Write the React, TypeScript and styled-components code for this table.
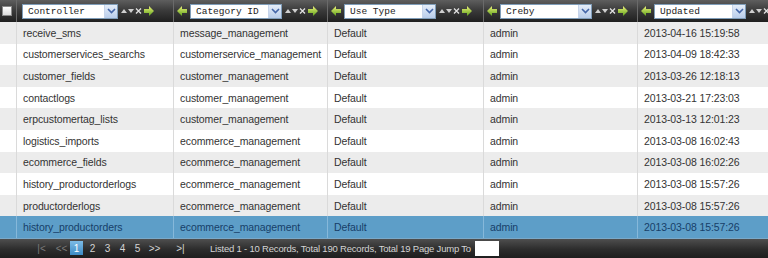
import React from "react";
import styled, { createGlobalStyle } from "styled-components";

const Global = createGlobalStyle`
  html, body { margin: 0; padding: 0; background: #fff; }
  body { font-family: "Liberation Sans", Arial, sans-serif; }
  * { box-sizing: border-box; }
`;

const COLS = "17px 157px 154px 156px 154px 160px";

const Grid = styled.div`
  width: 768px;
  height: 258px;
  overflow: hidden;
  display: flex;
  flex-direction: column;
`;

const HeaderRow = styled.div`
  display: grid;
  grid-template-columns: ${COLS};
  height: 22px;
  flex: none;
  background: linear-gradient(#5e5e5e 0%, #3c3c3c 45%, #1f1f1f 100%);
`;

const HeadCell = styled.div<{ $first?: boolean }>`
  display: flex;
  align-items: center;
  gap: 3px;
  padding-left: ${(p) => (p.$first ? "5px" : "3px")};
  border-right: 1px solid #6a6a6a;
  overflow: hidden;
  white-space: nowrap;
`;

const CheckCell = styled.div`
  display: flex;
  align-items: center;
  justify-content: center;
  border-right: 1px solid #6a6a6a;
`;

const HeadCheck = styled.span`
  width: 10px;
  height: 10px;
  margin-left: -2px;
  background: linear-gradient(#ffffff, #dcdcdc);
  border: 1px solid #8a8a8a;
`;

const Select = styled.div<{ $w: number }>`
  width: ${(p) => p.$w}px;
  height: 15px;
  flex: none;
  display: flex;
  align-items: center;
  background: #fff;
  border: 1px solid #7f9db9;
  font-family: "Liberation Mono", "Courier New", monospace;
  font-size: 9.5px;
  font-weight: normal;
  color: #222;
  padding-left: 5px;
`;

const SelectText = styled.span`
  flex: 1;
  overflow: hidden;
`;

const DropBtn = styled.span`
  width: 13px;
  height: 13px;
  display: flex;
  align-items: center;
  justify-content: center;
  background: linear-gradient(#e4ecf8, #b9cdea);
  border-left: 1px solid #c6d4ea;
`;

const IconGroup = styled.span`
  display: flex;
  align-items: center;
  gap: 1px;
  flex: none;
`;

const BodyRow = styled.div<{ $bg: string; $sel?: boolean }>`
  display: grid;
  grid-template-columns: ${COLS};
  height: 21.6px;
  flex: none;
  background: ${(p) => p.$bg};
  color: ${(p) => (p.$sel ? "#173f68" : "#333")};
  font-size: 10.5px;
  letter-spacing: -0.1px;
`;

const Cell = styled.div<{ $sel?: boolean }>`
  display: flex;
  align-items: center;
  padding-left: 6px;
  border-right: 1px solid ${(p) => (p.$sel ? "#86b8da" : "#dadada")};
  white-space: nowrap;
  overflow: hidden;
`;

const Footer = styled.div`
  height: 20px;
  flex: none;
  display: flex;
  align-items: center;
  padding-left: 34px;
  background: linear-gradient(#4e4e4e, #2c2c2c 55%, #1e1e1e);
  border-top: 1px solid #7aa9c9;
  font-size: 10px;
  color: #d4d4d4;
  white-space: nowrap;
`;

const FooterText = styled.span`
  font-size: 9.5px;
  letter-spacing: -0.2px;
`;

const PageLink = styled.span<{ $dim?: boolean; $active?: boolean; $mr?: number; $w?: number }>`
  display: inline-flex;
  align-items: center;
  justify-content: center;
  width: ${(p) => p.$w ?? 15}px;
  height: 14px;
  margin-right: ${(p) => p.$mr ?? 0}px;
  color: ${(p) => (p.$active ? "#fff" : p.$dim ? "#7a7a7a" : "#d4d4d4")};
  background: ${(p) => (p.$active ? "linear-gradient(#7cbbe6, #3d8cc6)" : "transparent")};
`;

const JumpBox = styled.span`
  width: 24px;
  height: 15px;
  margin-left: 4px;
  background: #fff;
`;

const Chevron = () => (
  <svg width="9" height="6" viewBox="0 0 9 6">
    <path d="M1 1 L4.5 4.5 L8 1" fill="none" stroke="#4466a8" strokeWidth="1.6" />
  </svg>
);

const GreenArrow = ({ dir }: { dir: "l" | "r" }) => (
  <svg width="10" height="10" viewBox="0 0 10 10" style={{ flex: "none" }}>
    <defs>
      <linearGradient id={`ga${dir}`} x1="0" y1="0" x2="0" y2="1">
        <stop offset="0" stopColor="#eef27a" />
        <stop offset="1" stopColor="#5fa31c" />
      </linearGradient>
    </defs>
    <polygon
      points={dir === "r" ? "0,3 5,3 5,0 10,5 5,10 5,7 0,7" : "10,3 5,3 5,0 0,5 5,10 5,7 10,7"}
      fill={`url(#ga${dir})`}
    />
  </svg>
);

const SortIcons = () => (
  <svg width="22" height="8" viewBox="0 0 22 8">
    <polygon points="0,6 3,2 6,6" fill="#cfcfcf" />
    <polygon points="7,2 13,2 10,6" fill="#cfcfcf" />
    <path d="M15 1.5 L20 6.5 M20 1.5 L15 6.5" stroke="#e0e0e0" strokeWidth="1.3" />
  </svg>
);

type Col = { label: string; w: number };
const cols: Col[] = [
  { label: "Controller", w: 96 },
  { label: "Category ID", w: 92 },
  { label: "Use Type", w: 92 },
  { label: "Creby", w: 92 },
  { label: "Updated", w: 92 },
];

const rows: string[][] = [
  ["receive_sms", "message_management", "Default", "admin", "2013-04-16 15:19:58"],
  ["customerservices_searchs", "customerservice_management", "Default", "admin", "2013-04-09 18:42:33"],
  ["customer_fields", "customer_management", "Default", "admin", "2013-03-26 12:18:13"],
  ["contactlogs", "customer_management", "Default", "admin", "2013-03-21 17:23:03"],
  ["erpcustomertag_lists", "customer_management", "Default", "admin", "2013-03-13 12:01:23"],
  ["logistics_imports", "ecommerce_management", "Default", "admin", "2013-03-08 16:02:43"],
  ["ecommerce_fields", "ecommerce_management", "Default", "admin", "2013-03-08 16:02:26"],
  ["history_productorderlogs", "ecommerce_management", "Default", "admin", "2013-03-08 15:57:26"],
  ["productorderlogs", "ecommerce_management", "Default", "admin", "2013-03-08 15:57:26"],
  ["history_productorders", "ecommerce_management", "Default", "admin", "2013-03-08 15:57:26"],
];

export default function App() {
  return (
    <>
      <Global />
      <Grid>
        <HeaderRow>
          <CheckCell>
            <HeadCheck />
          </CheckCell>
          {cols.map((c, i) => (
            <HeadCell key={c.label} $first={i === 0}>
              {i > 0 && <GreenArrow dir="l" />}
              <Select $w={c.w}>
                <SelectText>{c.label}</SelectText>
                <DropBtn>
                  <Chevron />
                </DropBtn>
              </Select>
              <IconGroup>
                <SortIcons />
                <GreenArrow dir="r" />
              </IconGroup>
            </HeadCell>
          ))}
        </HeaderRow>
        {rows.map((r, i) => {
          const sel = i === rows.length - 1;
          const bg = sel ? "#5d9ec8" : i % 2 === 0 ? "#ececec" : "#ffffff";
          return (
            <BodyRow key={i} $bg={bg} $sel={sel}>
              <Cell $sel={sel} />
              {r.map((v, j) => (
                <Cell key={j} $sel={sel}>
                  {v}
                </Cell>
              ))}
            </BodyRow>
          );
        })}
        <Footer>
          <PageLink $dim $mr={5}>|&lt;</PageLink>
          <PageLink $dim $mr={1}>&lt;&lt;</PageLink>
          <PageLink $active $w={13} $mr={2}>1</PageLink>
          <PageLink>2</PageLink>
          <PageLink>3</PageLink>
          <PageLink>4</PageLink>
          <PageLink $mr={2}>5</PageLink>
          <PageLink $mr={11}>&gt;&gt;</PageLink>
          <PageLink $mr={22}>&gt;|</PageLink>
          <FooterText>Listed 1 - 10 Records, Total 190 Records, Total 19 Page Jump To</FooterText>
          <JumpBox />
        </Footer>
      </Grid>
    </>
  );
}
